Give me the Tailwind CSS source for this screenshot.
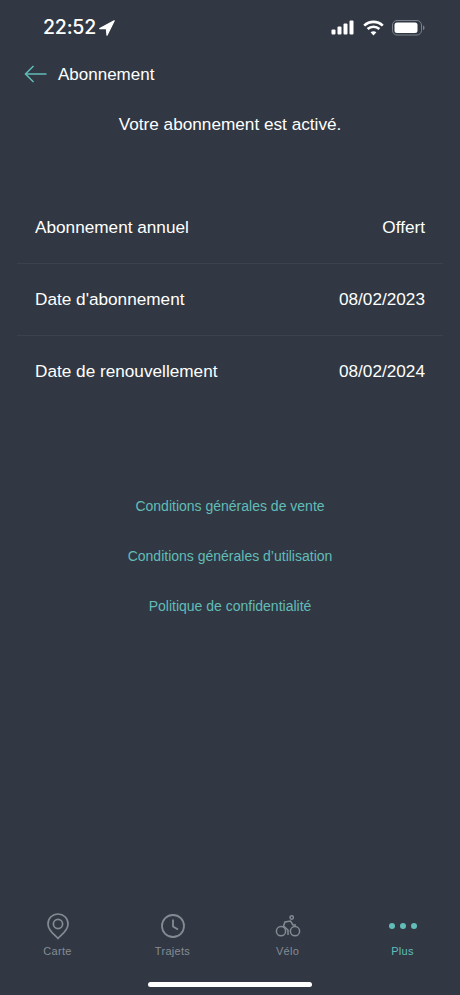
<!DOCTYPE html>
<html lang="fr">
<head>
    <title>Abonnement</title>
    <meta charset="utf-8">
    <meta name="viewport" content="width=device-width, initial-scale=1">
    <script src="https://cdn.jsdelivr.net/npm/@tailwindcss/browser@4"></script>
</head>
<body class="flex flex-col w-[460px] h-[995px] overflow-hidden bg-[#313843] text-white font-['Liberation_Sans',sans-serif]">
    <!-- status bar -->
    <div class="flex flex-row items-center justify-between h-[56px] shrink-0 pl-[43px] pr-[35px]">
        <div class="flex flex-row items-center gap-[3px]">
            <span class="text-[19.5px] font-medium leading-none font-['Inter',sans-serif] tracking-[-0.2px]">22:52</span>
            <svg class="w-[16px] h-[16px]" viewBox="0 0 16 16"><path d="M15.2 0.8 L0.8 8.6 L7.4 8.6 L8 15.2 Z" fill="#fff" stroke="#fff" stroke-width="1.2" stroke-linejoin="round"/></svg>
        </div>
        <div class="flex flex-row items-center gap-[8px]">
            <svg class="w-[24px] h-[16px]" viewBox="0 0 24 16" fill="#fff">
                <rect x="0.5" y="9.5" width="4" height="5" rx="1"/>
                <rect x="6.5" y="6.5" width="4" height="8" rx="1"/>
                <rect x="12.5" y="3.5" width="4" height="11" rx="1"/>
                <rect x="18.5" y="0.5" width="4" height="14" rx="1"/>
            </svg>
            <svg class="w-[21px] h-[16px]" viewBox="0 0 21 16" fill="none" stroke="#fff" stroke-width="2.6">
                <path d="M1.2 5.6 C6.4 0.6 14.6 0.6 19.8 5.6"/>
                <path d="M4.6 9 C7.9 5.9 13.1 5.9 16.4 9"/>
                <path d="M10.5 15.4 L7.6 12.2 C9.3 10.8 11.7 10.8 13.4 12.2 Z" fill="#fff" stroke="none"/>
            </svg>
            <svg class="w-[33px] h-[16px]" viewBox="0 0 33 16">
                <rect x="0.5" y="0.5" width="29" height="14.5" rx="4.5" fill="none" stroke="#7b818a" stroke-width="1"/>
                <rect x="2.5" y="2.5" width="23" height="10.5" rx="2.5" fill="#fff"/>
                <path d="M31 5.5 C32 5.8 32.5 6.6 32.5 7.7 C32.5 8.8 32 9.6 31 10 Z" fill="#7b818a"/>
            </svg>
        </div>
    </div>

    <!-- header -->
    <div class="flex flex-row items-center h-[36px] shrink-0 pl-[24px]">
        <svg class="w-[23px] h-[18px]" viewBox="0 0 23 18" fill="none" stroke="#62bdb8" stroke-width="1.5">
            <path d="M22.5 9 H1.5"/>
            <path d="M9.5 1 L1.5 9 L9.5 17"/>
        </svg>
        <h1 class="ml-[11px] text-[17px] leading-[20px] pt-[1px]">Abonnement</h1>
    </div>

    <p class="mt-[22px] text-center text-[17.2px] leading-[20px]">Votre abonnement est activé.</p>

    <!-- details -->
    <div class="mt-[58px] mx-[17px] flex flex-col">
        <div class="flex flex-row items-center justify-between h-[72px] px-[18px] border-b border-[#3a424d] text-[17.2px]">
            <span>Abonnement annuel</span>
            <span>Offert</span>
        </div>
        <div class="flex flex-row items-center justify-between h-[72px] px-[18px] border-b border-[#3a424d] text-[17.2px]">
            <span>Date d'abonnement</span>
            <span>08/02/2023</span>
        </div>
        <div class="flex flex-row items-center justify-between h-[72px] px-[18px] text-[17.2px]">
            <span>Date de renouvellement</span>
            <span>08/02/2024</span>
        </div>
    </div>

    <!-- links -->
    <div class="mt-[90px] flex flex-col items-center gap-[33.5px] text-[14px] leading-[16.5px] text-[#62bdb8]">
        <a>Conditions générales de vente</a>
        <a>Conditions générales d’utilisation</a>
        <a>Politique de confidentialité</a>
    </div>

    <!-- tab bar -->
    <nav class="mt-auto grid grid-cols-4 text-[11px] leading-[13px] tracking-[0.3px] text-[#868b93]">
        <div class="flex flex-col items-center gap-[5px]">
            <svg class="w-[28px] h-[28px]" viewBox="0 0 28 28" fill="none" stroke="#868b93" stroke-width="1.7">
                <path d="M14 26.5 C11 23 4 19 4 12 C4 6 8.5 2 14 2 C19.5 2 24 6 24 12 C24 19 17 23 14 26.5 Z"/>
                <circle cx="14" cy="12" r="4.6"/>
            </svg>
            <span>Carte</span>
        </div>
        <div class="flex flex-col items-center gap-[5px]">
            <svg class="w-[28px] h-[28px]" viewBox="0 0 28 28" fill="none" stroke="#868b93" stroke-width="1.8">
                <circle cx="14" cy="14" r="11"/>
                <path d="M14 7.5 V14.5 L19 17.5"/>
            </svg>
            <span>Trajets</span>
        </div>
        <div class="flex flex-col items-center gap-[5px]">
            <svg class="w-[28px] h-[28px]" viewBox="0 0 28 28" fill="none" stroke="#868b93" stroke-width="1.5">
                <circle cx="7" cy="19.2" r="4.6"/>
                <circle cx="21" cy="19.2" r="4.6"/>
                <circle cx="17.7" cy="5.5" r="1.7"/>
                <path d="M14 23 V18 L9.5 14 L11 10 L16.5 9 L19 13 H22"/>
            </svg>
            <span>Vélo</span>
        </div>
        <div class="flex flex-col items-center gap-[5px] text-[#62bdb8]">
            <div class="flex flex-row items-center justify-center h-[28px] gap-[5px]">
                <span class="w-[6px] h-[6px] rounded-full bg-[#62bdb8]"></span>
                <span class="w-[6px] h-[6px] rounded-full bg-[#62bdb8]"></span>
                <span class="w-[6px] h-[6px] rounded-full bg-[#62bdb8]"></span>
            </div>
            <span>Plus</span>
        </div>
    </nav>

    <!-- home indicator -->
    <div class="flex justify-center pt-[24px] pb-[8px]">
        <div class="w-[164px] h-[5px] rounded-full bg-white"></div>
    </div>
</body>
</html>
